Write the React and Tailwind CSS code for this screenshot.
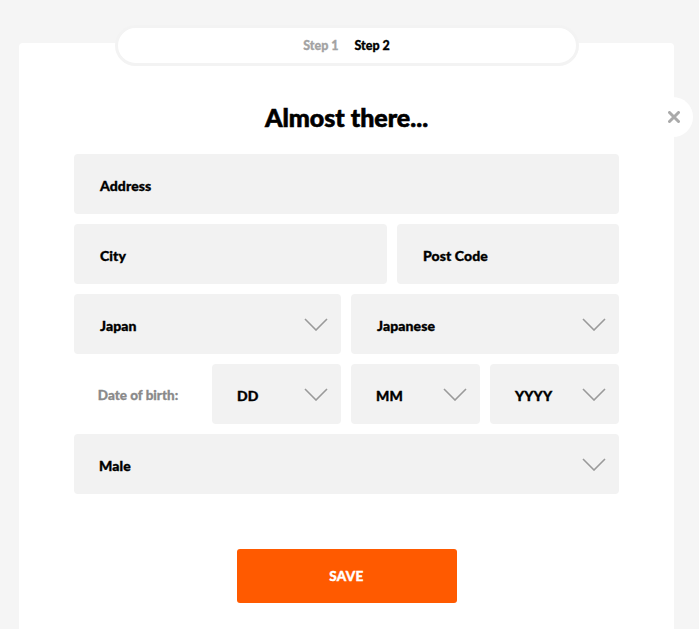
import React from "react";

const font = { fontFamily: "Lato, 'Noto Sans', sans-serif" };

function Chevron() {
  return (
    <svg width="24" height="13" viewBox="0 0 24 13" fill="none" className="shrink-0">
      <path d="M1 1 L12 12 L23 1" stroke="#9a9a9a" strokeWidth="1.6" />
    </svg>
  );
}

function Field({ label, className = "", select = false }) {
  return (
    <div
      className={`h-[60px] rounded-[4px] bg-[#f2f2f2] flex items-center justify-between pl-[26px] pr-[13px] ${className}`}
    >
      <span className="mt-[2px] text-[14px] font-black text-black tracking-[0.1px] [-webkit-text-stroke:0.35px_currentColor]">
        {label}
      </span>
      {select && <Chevron />}
    </div>
  );
}

export default function App() {
  return (
    <div className="min-h-[629px] bg-[#f5f5f5] relative overflow-hidden" style={font}>
      <div className="ml-[19px] w-[655px] mt-[43px] min-h-[586px] bg-white rounded-t-[4px] flex flex-col items-center relative">
        <div className="-mt-[18px] w-[464px] h-[41px] rounded-full bg-white border-[3px] border-[#f3f3f3] flex items-center justify-center gap-[16px]">
          <span className="mt-[2px] text-[12.5px] font-black text-[#a3a3a3] [-webkit-text-stroke:0.3px_currentColor]">Step 1</span>
          <span className="mt-[2px] text-[12.5px] font-black text-black [-webkit-text-stroke:0.3px_currentColor]">Step 2</span>
        </div>
        <h1 className="mt-[36px] text-[25px] leading-[30px] font-black text-black tracking-[0px] [-webkit-text-stroke:0.6px_currentColor]">
          Almost there...
        </h1>
        <div className="mt-[22px] w-[545px] flex flex-col gap-[10px]">
          <Field label="Address" className="w-full" />
          <div className="flex gap-[10px]">
            <Field label="City" className="w-[313px]" />
            <Field label="Post Code" className="w-[222px]" />
          </div>
          <div className="flex gap-[10px]">
            <Field label="Japan" select className="w-[267px]" />
            <Field label="Japanese" select className="w-[268px]" />
          </div>
          <div className="flex gap-[10px]">
            <div className="w-[128px] h-[60px] flex items-center justify-center">
              <span className="mt-[2px] text-[13.5px] font-black text-[#8a8a8a] [-webkit-text-stroke:0.3px_currentColor]">Date of birth:</span>
            </div>
            <Field label="DD" select className="w-[129px] !pl-[25px]" />
            <Field label="MM" select className="w-[129px] !pl-[25px]" />
            <Field label="YYYY" select className="w-[129px] !pl-[25px]" />
          </div>
          <Field label="Male" select className="w-full !pl-[25px]" />
        </div>
        <button className="mt-[55px] w-[220px] h-[54px] rounded-[3px] bg-[#ff5a00] text-white text-[13.5px] font-black tracking-[0.3px] [-webkit-text-stroke:0.4px_currentColor]">
          SAVE
        </button>
      </div>
      <div className="absolute left-[653px] top-[97px] w-[40px] h-[40px] rounded-full bg-white flex items-center justify-center">
        <svg width="12" height="12" viewBox="0 0 12 12" className="ml-[2px]">
          <path d="M1.5 1.5 L10.5 10.5 M10.5 1.5 L1.5 10.5" stroke="#aaaaaa" strokeWidth="3" strokeLinecap="round" />
        </svg>
      </div>
    </div>
  );
}
